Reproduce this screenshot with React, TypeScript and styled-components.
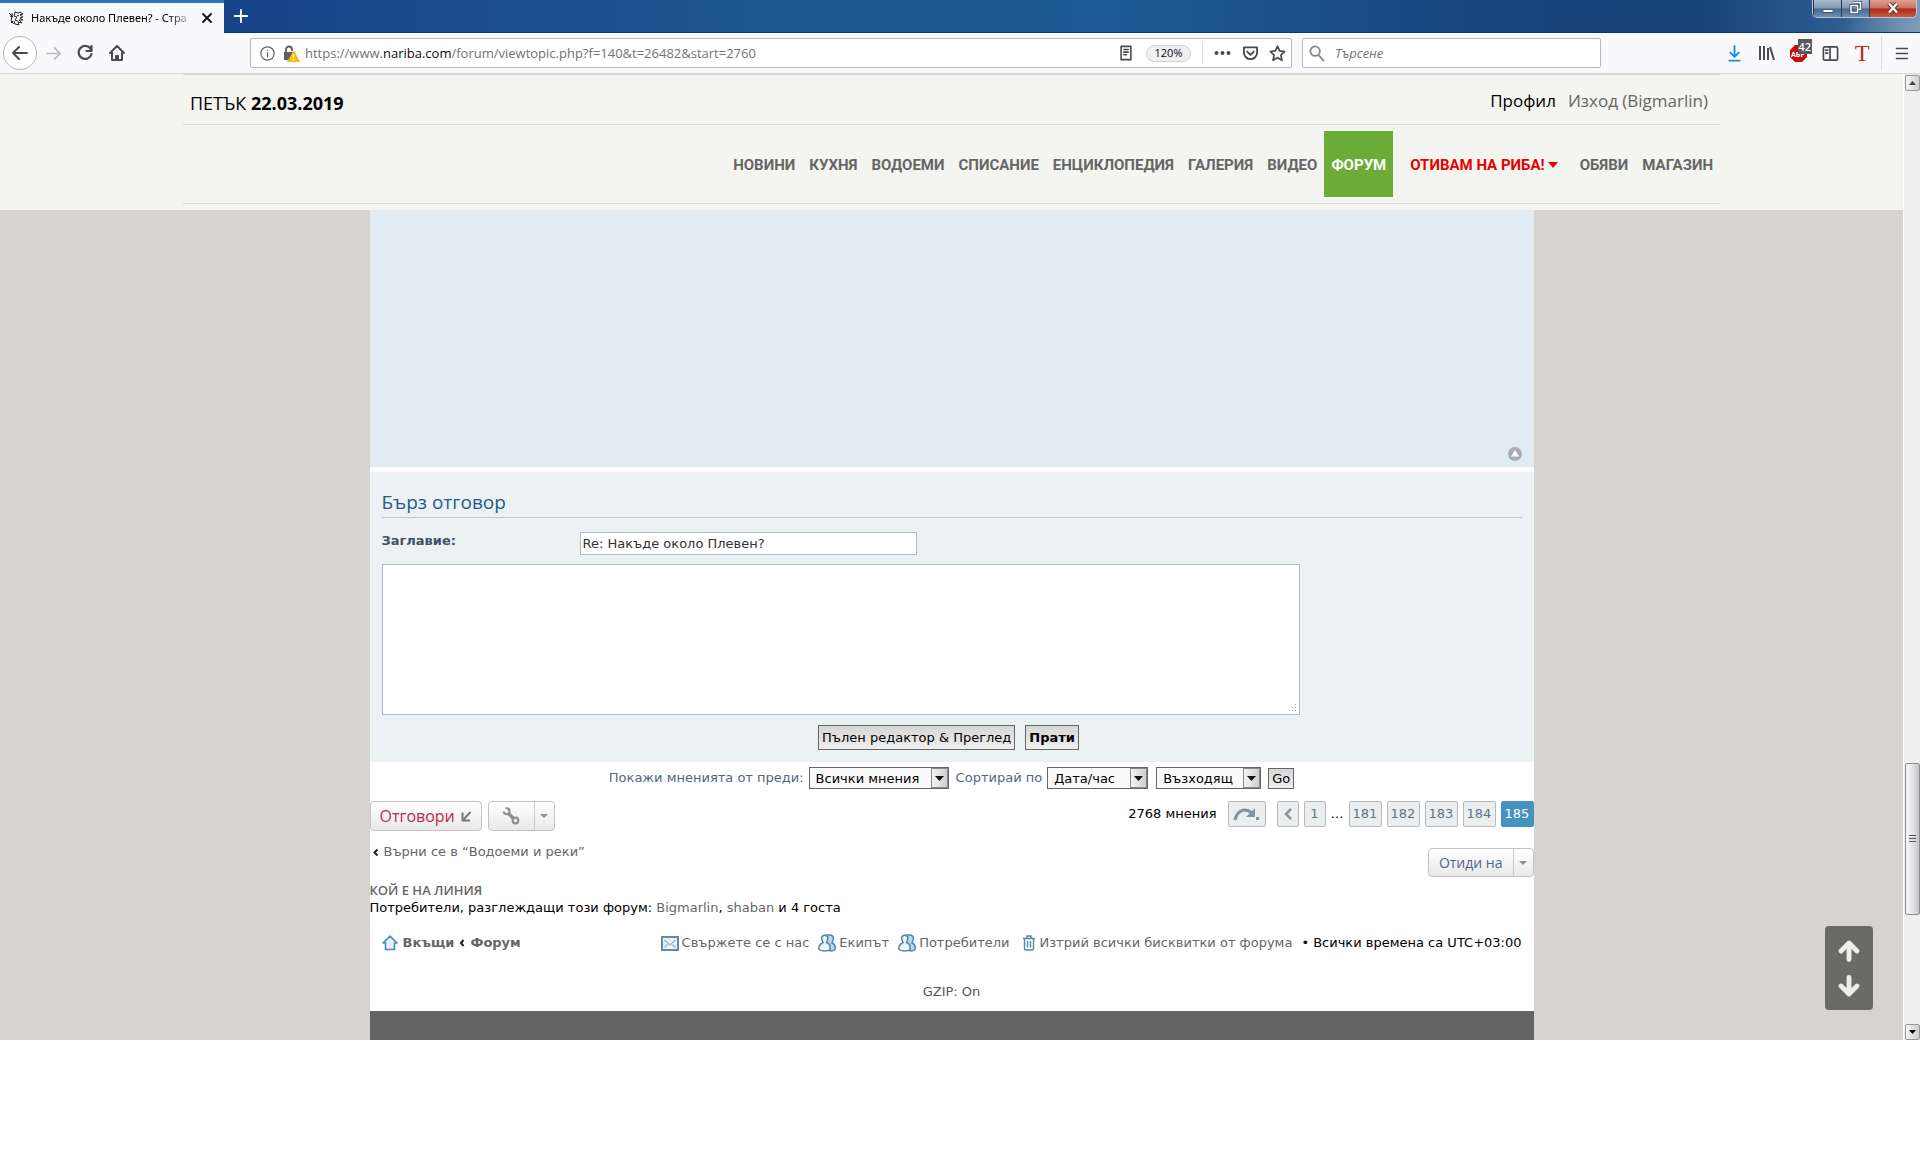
import React from "react";
import styled, { createGlobalStyle, css } from "styled-components";

const GlobalStyle = createGlobalStyle`
  *, *::before, *::after { box-sizing: border-box; }
  body { margin: 0; background: #fff; font-family: "DejaVu Sans", Verdana, sans-serif; font-size: 13px; line-height: 18px; color: #000; }
  a { color: inherit; text-decoration: none; }
  button, input, select, textarea { font-family: inherit; font-size: inherit; margin: 0; }
  svg { display: block; flex: none; }
`;

const ui = `"Open Sans", "Noto Sans", sans-serif`;

/* ---------- browser chrome ---------- */

const TitleBar = styled.div`
  display: flex;
  justify-content: space-between;
  height: 33px;
  background: linear-gradient(100deg, transparent 96%, #8fa9c0 101%),
    linear-gradient(90deg, #17427f 0%, #18458a 14%, #1d5590 38%, #1e5a95 58%, #184883 74%, #174276 88%, #2a5a8e 95%, #47729d 100%);
  border-bottom: 1px solid #1c3358;
`;

const Tab = styled.div`
  display: flex;
  align-items: center;
  width: 224px;
  height: 33px;
  padding: 0 11px 0 8px;
  gap: 6px;
  background: #f9f9fb;
  border-top: 3px solid #2d73c6;
  font: 11px/18px "Noto Sans", sans-serif;
`;

const TabTitle = styled.span`
  flex: 1;
  white-space: nowrap;
  mask-image: linear-gradient(90deg, #000 84%, transparent 100%);
`;

const IconButton = styled.button<{ $w?: number; $c?: string }>`
  display: flex;
  align-items: center;
  justify-content: center;
  flex: none;
  width: ${(p) => p.$w ?? 32}px;
  height: 32px;
  padding: 0;
  border: 0;
  background: none;
  color: ${(p) => p.$c ?? "#4a4a4f"};
`;

const TabClose = styled(IconButton)`
  width: 12px;
  height: 12px;
`;

const TabGroup = styled.div`
  display: flex;
`;

const WindowButtons = styled.div`
  display: flex;
  height: 18px;
  margin-right: 3px;
  border: 1px solid #b8c8da;
  border-top: 0;
  border-radius: 0 0 5px 5px;
  overflow: hidden;
`;

const WindowButton = styled.button<{ $close?: boolean }>`
  display: flex;
  align-items: center;
  justify-content: center;
  width: ${(p) => (p.$close ? 47 : 28)}px;
  padding: 0 0 2px;
  border: 0;
  border-left: 1px solid #27394f;
  background: ${(p) =>
    p.$close
      ? "linear-gradient(#dba092, #c9705f 48%, #ab2a15 52%, #c85b42)"
      : "linear-gradient(#a9bccf, #7f99b5 48%, #48688c 52%, #6f8eb0)"};
`;

const Toolbar = styled.div`
  display: flex;
  align-items: center;
  height: 41px;
  background: #f9f9fb;
  border-bottom: 1px solid #d5d5d7;
`;

const BackButton = styled(IconButton)`
  width: 34px;
  height: 34px;
  margin: 0 0 0 3px;
  border: 1px solid #b5b5b8;
  border-radius: 50%;
  background: #fff;
`;

const NavButtons = styled.div`
  display: flex;
  align-items: center;
  width: 250px;
`;

const Field = styled.label<{ $grow?: boolean }>`
  display: flex;
  align-items: center;
  height: 30px;
  ${(p) => (p.$grow ? "flex: 1; min-width: 0;" : "width: 299px; margin-left: 10px;")}
  border: 1px solid #b9b9bc;
  border-radius: 2px;
  background: #fff;
  font-family: ${ui};
  color: #737373;
`;

const UrlText = styled.span`
  flex: 1;
  padding-left: 5px;
  white-space: nowrap;
  overflow: hidden;
  b { font-weight: 400; color: #0c0c0d; }
`;

const SearchInput = styled.input`
  flex: 1;
  min-width: 0;
  border: 0;
  padding: 0 6px;
  background: none;
  font-size: 13px;
  outline: 0;
  &::placeholder { color: #737373; font-style: italic; opacity: 1; }
`;

const Zoom = styled.button`
  width: 45px;
  height: 17px;
  margin: 0 11px 0 9px;
  padding: 0;
  border: 1px solid #cfcfd2;
  border-radius: 9px;
  background: #f0f0f2;
  font-size: 11px;
  line-height: 14px;
  color: #0c0c0d;
`;

const Rule = styled.span`
  width: 1px;
  height: 22px;
  margin-right: 4px;
  background: #dcdcde;
`;

const TallRule = styled(Rule)`
  height: 34px;
  margin: 0 0 0 3px;
`;

const Extensions = styled.div`
  display: flex;
  align-items: center;
  justify-content: flex-end;
  width: 319px;
`;

const Adblock = styled.span`
  position: relative;
  display: block;
`;

const Badge = styled.span`
  position: absolute;
  left: 8px;
  top: -6px;
  padding: 0 1px;
  background: #5a5a5c;
  color: #fff;
  font: 600 11px/15px ${ui};
`;

const SerifT = styled.span`
  font: 24px/24px "Liberation Serif", serif;
  color: #b3301d;
`;

/* ---------- viewport and scrollbar ---------- */

const Viewport = styled.div`
  position: relative;
  display: flex;
`;

const Page = styled.div`
  flex: 1;
  min-width: 0;
  background: #d5d4cf;
`;

const Scrollbar = styled.div`
  display: flex;
  flex-direction: column;
  width: 17px;
  padding: 1px 0 0 1px;
  border-left: 1px solid #fff;
  background: #efeff0;
`;

const ScrollButton = styled.button`
  display: flex;
  align-items: center;
  justify-content: center;
  width: 15px;
  height: 16px;
  padding: 0;
  border: 1px solid #999;
  border-radius: 2px;
  background: linear-gradient(90deg, #f4f4f4, #cfcfd2);
`;

const Track = styled.div<{ $part: number }>`
  flex: ${(p) => p.$part} 1 0;
`;

const Thumb = styled.div`
  display: flex;
  align-items: center;
  justify-content: center;
  width: 15px;
  height: 152px;
  border: 1px solid #8f8f92;
  border-radius: 2px;
  background: linear-gradient(90deg, #f6f6f6, #e4e4e7 50%, #c3c3c9);
`;

/* ---------- site header ---------- */

const Header = styled.header`
  padding: 0 20px 6px;
  background: #f4f4f1;
  font-family: ${ui};
`;

const HeaderInner = styled.div`
  max-width: 1537px;
  margin: 0 auto;
  border-top: 1px solid #dadad8;
`;

const TopLine = styled.div`
  display: flex;
  justify-content: space-between;
  height: 50px;
  padding: 15px 12px 0 7px;
  border-bottom: 1px solid #dadad8;
  font-size: 17px;
  line-height: 26px;
`;

const Today = styled.span`
  font-size: 18px;
`;

const UserLinks = styled.div`
  display: flex;
  gap: 12px;
  line-height: 22px;
`;

const GreyLink = styled.a`
  color: #666;
`;

const MainNav = styled.nav`
  display: flex;
  justify-content: flex-end;
  padding: 6px 0;
  border-bottom: 1px solid #dadad8;
  font: bold 15px/64px Roboto, sans-serif;
  color: #666;
`;

const NavLink = styled.a<{ $kind?: "active" | "hot" }>`
  display: flex;
  align-items: center;
  gap: 3px;
  padding: 2px 7px 0;
  white-space: nowrap;
  ${(p) => p.$kind === "active" && css`background: #6bac39; color: #fff;`}
  ${(p) => p.$kind === "hot" && css`margin: 0 8px 0 10px; color: #e60000;`}
`;

/* ---------- forum body ---------- */

const Content = styled.main`
  max-width: 1164px;
  margin: 0 auto;
  background: #fff;
`;

const Post = styled.section`
  display: flex;
  align-items: flex-end;
  justify-content: flex-end;
  height: 257px;
  padding: 6px 12px;
  margin-bottom: 5px;
  background: #e1ebf2;
`;

const QuickReply = styled.form`
  padding: 17px 12px 12px;
  background: #ecf1f3;
`;

const ReplyTitle = styled.h2`
  margin: 0 0 14px;
  padding-bottom: 2px;
  border-bottom: 1px solid #c0c5ca;
  font: 19px/26px ${ui};
  color: #28568f;
`;

const SubjectRow = styled.div`
  display: flex;
  margin-bottom: 9px;
`;

const SubjectLabel = styled.label`
  width: 198px;
  line-height: 17px;
  font-weight: bold;
  color: #425067;
`;

const SubjectInput = styled.input`
  width: 337px;
  height: 23px;
  padding: 0 2px;
  border: 1px solid #b4bac0;
  border-radius: 0;
  background: #fff;
  color: #333;
`;

const MessageWrap = styled.div`
  position: relative;
  width: 918px;
  max-width: 100%;
`;

const Message = styled.textarea`
  display: block;
  width: 100%;
  height: 151px;
  border: 1px solid #b4bac0;
  background: #fff;
  resize: none;
`;

const Grip = styled.svg`
  position: absolute;
  right: 3px;
  bottom: 3px;
`;

const Buttons = styled.div`
  display: flex;
  justify-content: center;
  gap: 10px;
  padding-top: 10px;
  padding-right: 6px;
`;

const FormButton = styled.button<{ $bold?: boolean; $small?: boolean }>`
  height: ${(p) => (p.$small ? 21 : 25)}px;
  padding: 0 3px;
  border: 1px solid #666;
  border-radius: 0;
  background: linear-gradient(#d6d6d6, #efefef);
  font-weight: ${(p) => (p.$bold ? "bold" : "normal")};
  color: #000;
`;

const SortBar = styled.form`
  display: flex;
  align-items: center;
  justify-content: center;
  padding: 5px 0;
  color: #536482;
`;

const SortLabel = styled.label`
  margin-right: 5px;
`;

const SelectBox = styled.span<{ $w: number; $gap: number }>`
  position: relative;
  width: ${(p) => p.$w}px;
  margin-right: ${(p) => p.$gap}px;
`;

const Select = styled.select`
  display: block;
  appearance: none;
  width: 100%;
  height: 22px;
  padding: 0 20px 0 6px;
  border: 1px solid #666;
  border-radius: 0;
  background: #fafafa;
  color: #000;
`;

const SelectArrow = styled.span`
  position: absolute;
  right: 1px;
  top: 1px;
  display: flex;
  align-items: center;
  justify-content: center;
  width: 17px;
  height: 20px;
  border: 1px solid #888;
  background: linear-gradient(90deg, #f4f4f4, #cfcfd2);
  color: #111;
  pointer-events: none;
`;

const ActionBar = styled.div`
  display: flex;
  align-items: flex-start;
  padding-top: 7px;
`;

const PillButton = styled.button<{ $split?: boolean; $tone?: string; $size?: number }>`
  display: flex;
  align-items: center;
  height: 30px;
  margin-right: 6px;
  padding: ${(p) => (p.$split ? "0" : "0 10px 0 9px")};
  gap: ${(p) => (p.$split ? 0 : 6)}px;
  border: 1px solid #c0c2c4;
  border-radius: 4px;
  background: linear-gradient(#fff, #e9e9e9);
  font: ${(p) => p.$size ?? 16}px/28px ${ui};
  color: ${(p) => p.$tone ?? "#8f8f8f"};
`;

const SplitMain = styled.span`
  display: flex;
  align-items: center;
  justify-content: center;
  height: 28px;
  min-width: 45px;
  padding: 0 10px;
`;

const SplitCaret = styled.span`
  display: flex;
  align-items: center;
  justify-content: center;
  width: 20px;
  height: 28px;
  border-left: 1px solid #c8cacc;
  color: #8f8f8f;
`;

const Pagination = styled.nav`
  display: flex;
  align-items: center;
  gap: 5px;
  margin-left: auto;
`;

const PostCount = styled.span`
  margin-right: 6px;
`;

const PageLink = styled.a<{ $current?: boolean; $w?: number; $gap?: number }>`
  display: flex;
  align-items: center;
  justify-content: center;
  width: ${(p) => p.$w ?? 33}px;
  height: 26px;
  margin-right: ${(p) => p.$gap ?? 0}px;
  border: 1px solid ${(p) => (p.$current ? "#4692bf" : "#b4bac0")};
  border-radius: 2px;
  background: ${(p) => (p.$current ? "#4692bf" : "#eceded")};
  color: ${(p) => (p.$current ? "#fff" : "#5c758c")};
`;

const JumpRow = styled.div`
  display: flex;
  justify-content: space-between;
  padding-top: 12px;
  height: 50px;
`;

const BackLink = styled.a`
  display: flex;
  align-items: center;
  gap: 5px;
  height: 18px;
  padding-left: 2px;
  color: #666;
`;

const JumpButton = styled(PillButton)`
  margin: 5px 0 0;
  height: 29px;
`;

const OnlineTitle = styled.h3`
  margin: 0;
  font: 600 13px/18px ${ui};
  color: #666;
`;

const OnlineText = styled.p`
  margin: 0;
`;

const FootNav = styled.nav`
  display: flex;
  align-items: center;
  height: 24px;
  margin: 14px 12px 28px;
`;

const Crumbs = styled.div`
  display: flex;
  align-items: center;
  gap: 5px;
  margin-right: auto;
  font-weight: bold;
  color: #666;
`;

const FootLink = styled.a<{ $gap?: number }>`
  display: flex;
  align-items: center;
  gap: 3px;
  margin-right: ${(p) => p.$gap ?? 9}px;
  color: #666;
`;

const Gzip = styled.p`
  margin: 0;
  padding-bottom: 10px;
  text-align: center;
  color: #555;
`;

const DarkFooter = styled.footer`
  height: 29px;
  background: #646464;
`;

const JumpArrows = styled.div`
  position: absolute;
  right: 47px;
  bottom: 30px;
  display: flex;
  flex-direction: column;
  align-items: center;
  width: 48px;
  height: 84px;
  padding: 7px 0;
  border-radius: 4px;
  background: #6a6a67;
`;

const ArrowButton = styled.button`
  display: flex;
  align-items: center;
  justify-content: center;
  width: 100%;
  height: 35px;
  padding: 0;
  border: 0;
  background: none;
  color: #ededeb;
`;

/* ---------- drawings ---------- */

const Caret = ({ w = 9, h = 5 }: { w?: number; h?: number }) => (
  <svg width={w} height={h} viewBox="0 0 10 6" preserveAspectRatio="none"><path d="M0 0h10L5 6z" fill="currentColor" /></svg>
);

const Stroke = ({ d, size = 18, sw = 2 }: { d: string; size?: number; sw?: number }) => (
  <svg width={size} height={size} viewBox="0 0 18 18" fill="none" stroke="currentColor" strokeWidth={sw} strokeLinecap="round" strokeLinejoin="round">
    <path d={d} />
  </svg>
);

const FishIcon = () => (
  <svg width="17" height="17" viewBox="0 0 17 17" fill="none" stroke="#222" strokeWidth="1">
    <path d="M1 3l3 3-1 5 3 3M2 6l3 1M4 3v4M7 2l3 1 2-1 3 2-3 1M12 5l3 2-3 1 3 2-4 0M11 10l3 3-4-1 1 3-4-1-1-3M7 2L6 6l3 1-2 3 3 1M9 5l2 1M5 11l-2 2" />
  </svg>
);

const UsersIcon = () => (
  <svg width="18" height="18" viewBox="0 0 18 18" fill="#eef4f8" stroke="#4e88ad" strokeWidth="1.5">
    <path d="M8 9C6 6 6 1.200 9.500 1H12c4 0 4 5 2 8 3 1 3.500 4 3 6.500-2 2-6 2-8 0z" fill="#bcd6e6" />
    <path d="M5 8.500C3 5 3 1.200 6.800 1.200S10.500 5 8.500 8.500c3.500 1.500 4 4 3.500 7-2.500 2-8 2-11 0-.5-3 1-5.500 4-7z" />
  </svg>
);

const HomeBlue = () => (
  <svg width="16" height="16" viewBox="0 0 16 16" fill="#e9eef2" stroke="#3c8fc4" strokeWidth="1.600" strokeLinejoin="round">
    <path d="M8 1l7 7h-2.500v6.500h-9V8H1z" />
  </svg>
);

const Envelope = () => (
  <svg width="18" height="15" viewBox="0 0 18 15" fill="#edf2f6" stroke="#5a8cab" strokeWidth="2">
    <path d="M1 1h16v13H1z" /><path d="M3.500 4L9 9l5.500-5M3.500 11.500l3-3M14.500 11.500l-3-3" stroke="#9fb4c4" strokeWidth="1.500" fill="none" />
  </svg>
);

const Trash = () => (
  <svg width="14" height="16" viewBox="0 0 14 16" fill="none" stroke="#4e88ad" strokeWidth="1.400">
    <path d="M1 3.500h12M5 3V1h4v2M2.500 4v9.500q0 1.500 1.500 1.500h6q1.500 0 1.500-1.500V4M5.500 6v6.500M8.500 6v6.500" />
  </svg>
);

const pages = ["181", "182", "183", "184"];

const Dropdown = ({ id, value, w, gap }: { id: string; value: string; w: number; gap: number }) => (
  <SelectBox $w={w} $gap={gap}>
    <Select id={id}><option>{value}</option></Select>
    <SelectArrow><Caret /></SelectArrow>
  </SelectBox>
);

export default function App() {
  return (
    <>
      <GlobalStyle />
      <TitleBar>
        <TabGroup>
          <Tab>
            <FishIcon />
            <TabTitle>Накъде около Плевен? - Стра</TabTitle>
            <TabClose $c="#111" aria-label="Затвори"><Stroke size={12} sw={2.800} d="M3 3l12 12M15 3L3 15" /></TabClose>
          </Tab>
          <IconButton $c="#fff" $w={34} aria-label="Нов раздел"><Stroke size={16} d="M9 2v14M2 9h14" /></IconButton>
        </TabGroup>
        <WindowButtons>
          <WindowButton aria-label="Минимизирай"><svg width="12" height="12" viewBox="0 0 12 12"><path d="M1 7.500h10v3H1z" fill="#fff" stroke="#45566b" /></svg></WindowButton>
          <WindowButton aria-label="Възстанови"><svg width="13" height="13" viewBox="0 0 13 13" fill="none"><path d="M4.500 1.500h7v7h-2M2 4.500h6.500v7H2z" stroke="#35465b" strokeWidth="3" /><path d="M4.500 1.500h7v7h-2M2 4.500h6.500v7H2z" stroke="#fff" strokeWidth="1.500" /></svg></WindowButton>
          <WindowButton $close aria-label="Затвори прозореца"><svg width="14" height="12" viewBox="0 0 14 12"><path d="M3 1.500l8 9M11 1.500l-8 9" stroke="#6d2a20" strokeWidth="4.500" /><path d="M3 1.500l8 9M11 1.500l-8 9" stroke="#fff" strokeWidth="2.500" /></svg></WindowButton>
        </WindowButtons>
      </TitleBar>

      <Toolbar>
        <NavButtons>
          <BackButton aria-label="Назад"><Stroke d="M16 9H2M8 3L2 9l6 6" /></BackButton>
          <IconButton $c="#b9b9bb" aria-label="Напред"><Stroke size={17} sw={1.800} d="M2 9h14M10 3l6 6-6 6" /></IconButton>
          <IconButton aria-label="Презареди"><Stroke d="M15 5.500A6.500 6.500 0 1 0 15.500 10M15.500 2v5h-5" sw={2.200} /></IconButton>
          <IconButton aria-label="Начало"><Stroke d="M2 9l7-7 7 7M4 8.500V16h10V8.500M8 16v-4h2v4" /></IconButton>
        </NavButtons>
        <Field as="div" $grow>
          <IconButton $c="#6a6a6d" aria-label="Информация"><Stroke size={15} sw={1.500} d="M9 1a8 8 0 1 0 0 16A8 8 0 1 0 9 1M9 8v5M9 5v.3" /></IconButton>
          <svg width="17" height="17" viewBox="0 0 17 17">
            <path d="M3 7V4.500a3 3 0 0 1 6 0V6" fill="none" stroke="#5f5f62" strokeWidth="1.900" />
            <path d="M1 7h9l-3 8H1z" fill="#5f5f62" />
            <path d="M10.500 6l6 10.500h-12z" fill="#ffbf00" stroke="#e89d00" strokeWidth=".6" />
            <path d="M10.500 9.500v3.500M10.500 14v1.300" stroke="#fff" strokeWidth="1.400" />
          </svg>
          <UrlText>https://www.<b>nariba.com</b>/forum/viewtopic.php?f=140&amp;t=26482&amp;start=2760</UrlText>
          <IconButton $w={22} aria-label="Режим за четене"><Stroke size={16} sw={1.800} d="M3.500 1.500h11v15h-11zM6.500 5h5M6.500 8h5M6.500 11h3" /></IconButton>
          <Zoom>120%</Zoom>
          <Rule />
          <IconButton $w={30} aria-label="Действия"><svg width="17" height="4" viewBox="0 0 17 4" fill="currentColor"><circle cx="2.500" cy="2" r="2" /><circle cx="8.500" cy="2" r="2" /><circle cx="14.500" cy="2" r="2" /></svg></IconButton>
          <IconButton $w={26} aria-label="Pocket"><Stroke size={17} d="M2 2.500h14v5.500a7 7 0 0 1-14 0zM5.500 7L9 10.500 12.500 7" /></IconButton>
          <IconButton $w={28} aria-label="Отметка"><Stroke size={17} sw={1.800} d="M9 1.300l2.300 5 5.200.6-3.900 3.700 1.100 5.600L9 13.400l-4.700 2.800 1.100-5.600L1.500 6.900l5.200-.6z" /></IconButton>
        </Field>
        <Field htmlFor="web-search">
          <IconButton $w={26} $c="#8a8a8d" as="span"><Stroke size={17} d="M7.500 1.500a5 5 0 1 0 0 10a5 5 0 1 0 0-10M11 10.500l5.500 6" /></IconButton>
          <SearchInput id="web-search" placeholder="Търсене" />
        </Field>
        <Extensions>
          <IconButton $c="#1e88e5" aria-label="Изтегляния"><Stroke size={17} d="M9 1v11M4.500 8L9 12.500 13.500 8M3.500 16.500h11" /></IconButton>
          <IconButton aria-label="Библиотека"><svg width="17" height="16" viewBox="0 0 17 16" stroke="currentColor" strokeWidth="2" fill="none"><path d="M2 1v14M6 1v14M10 3v12M12 2l4 13" /></svg></IconButton>
          <IconButton aria-label="Adblock">
            <Adblock>
              <svg width="17" height="17" viewBox="0 0 17 17"><path d="M5 0h7l5 5v7l-5 5H5l-5-5V5z" fill="#c70d0d" /><text x="1" y="11.500" fontSize="7" fontWeight="bold" fill="#fff" fontFamily="Open Sans, sans-serif">ABP</text></svg>
              <Badge>42</Badge>
            </Adblock>
          </IconButton>
          <IconButton aria-label="Странична лента"><Stroke size={17} sw={1.800} d="M3 2h12q1.500 0 1.500 1.500v11Q16.500 16 15 16H3q-1.500 0-1.500-1.500v-11Q1.500 2 3 2zM8.500 2v14M4 5.500h2M4 8.500h2" /></IconButton>
          <IconButton aria-label="T"><SerifT>T</SerifT></IconButton>
          <TallRule />
          <IconButton $w={38} aria-label="Меню"><Stroke size={15} d="M3 3h13M3 9h13M3 15h13" /></IconButton>
        </Extensions>
      </Toolbar>

      <Viewport>
        <Page>
          <Header>
            <HeaderInner>
              <TopLine>
                <Today>ПЕТЪК <b>22.03.2019</b></Today>
                <UserLinks><a href="#profile">Профил</a><GreyLink href="#logout">Изход (Bigmarlin)</GreyLink></UserLinks>
              </TopLine>
              <MainNav>
                {["НОВИНИ", "КУХНЯ", "ВОДОЕМИ", "СПИСАНИЕ", "ЕНЦИКЛОПЕДИЯ", "ГАЛЕРИЯ", "ВИДЕО"].map((t) => <NavLink key={t} href="#nav">{t}</NavLink>)}
                <NavLink href="#forum" $kind="active">ФОРУМ</NavLink>
                <NavLink href="#fishing" $kind="hot">ОТИВАМ НА РИБА!<Caret w={10} h={6} /></NavLink>
                <NavLink href="#ads">ОБЯВИ</NavLink>
                <NavLink href="#shop">МАГАЗИН</NavLink>
              </MainNav>
            </HeaderInner>
          </Header>

          <Content>
            <Post>
              <a href="#top" aria-label="Горе"><svg width="14" height="14" viewBox="0 0 14 14"><circle cx="7" cy="7" r="7" fill="#a9adb2" /><path d="M7 3l4 6.500H3z" fill="#fff" /></svg></a>
            </Post>

            <QuickReply onSubmit={(e) => e.preventDefault()}>
              <ReplyTitle>Бърз отговор</ReplyTitle>
              <SubjectRow>
                <SubjectLabel htmlFor="subject">Заглавие:</SubjectLabel>
                <SubjectInput id="subject" defaultValue="Re: Накъде около Плевен?" />
              </SubjectRow>
              <MessageWrap>
                <Message aria-label="Съобщение" />
                <Grip width="9" height="9" viewBox="0 0 9 9" fill="#a0a0a0"><path d="M7 1h1v1H7zM4 4h1v1H4zM7 4h1v1H7zM1 7h1v1H1zM4 7h1v1H4zM7 7h1v1H7z" /></Grip>
              </MessageWrap>
              <Buttons>
                <FormButton type="button">Пълен редактор &amp; Преглед</FormButton>
                <FormButton $bold>Прати</FormButton>
              </Buttons>
            </QuickReply>

            <SortBar onSubmit={(e) => e.preventDefault()}>
              <SortLabel htmlFor="since">Покажи мненията от преди:</SortLabel>
              <Dropdown id="since" value="Всички мнения" w={140} gap={7} />
              <SortLabel htmlFor="sort">Сортирай по</SortLabel>
              <Dropdown id="sort" value="Дата/час" w={101} gap={8} />
              <Dropdown id="dir" value="Възходящ" w={105} gap={7} />
              <FormButton $small>Go</FormButton>
            </SortBar>

            <ActionBar>
              <PillButton $tone="#bc2a4d">Отговори
                <svg width="10" height="11" viewBox="0 0 10 11" fill="none" stroke="#777" strokeWidth="2"><path d="M9.500 1L3 8M1.500 1.500v8H9" /></svg>
              </PillButton>
              <PillButton $split aria-label="Инструменти">
                <SplitMain><svg width="18" height="18" viewBox="0 0 18 18" fill="none" stroke="#8f8f8f"><path d="M6.500 6.500l5 5" strokeWidth="3.500" /><path d="M3.500 1.500c3-1 5 1.500 3.500 4.500-2 2-5 1-5.500-1.500" strokeWidth="2.200" /><circle cx="13.500" cy="13.500" r="2.800" strokeWidth="2.200" /></svg></SplitMain>
                <SplitCaret><Caret w={8} h={4} /></SplitCaret>
              </PillButton>
              <Pagination>
                <PostCount>2768 мнения</PostCount>
                <PageLink href="#jump" $w={38} $gap={6} aria-label="Отиди на страница">
                  <svg width="28" height="16" viewBox="0 0 28 16" fill="none"><path d="M2 14C4 5 11 1 19 7" stroke="#7f93a3" strokeWidth="3" /><path d="M22 2v9h-9z" fill="#7f93a3" /><path d="M23 11h3v3h-3z" fill="#7f93a3" /></svg>
                </PageLink>
                <PageLink href="#prev" $w={22} aria-label="Предишна"><svg width="8" height="12" viewBox="0 0 8 12" fill="none" stroke="#8494a3" strokeWidth="2.500"><path d="M7 1L2 6l5 5" /></svg></PageLink>
                <PageLink href="#1" $w={22}>1</PageLink>
                <span>…</span>
                {pages.map((n) => <PageLink key={n} href={`#${n}`}>{n}</PageLink>)}
                <PageLink href="#185" $current>185</PageLink>
              </Pagination>
            </ActionBar>

            <JumpRow>
              <BackLink href="#back"><svg width="7" height="9" viewBox="0 0 7 9" fill="none" stroke="#222" strokeWidth="2"><path d="M5.500 1.500L2.500 4.500l3 3" /></svg>Върни се в “Водоеми и реки”</BackLink>
              <JumpButton $split $tone="#536482" $size={14}><SplitMain>Отиди на</SplitMain><SplitCaret><Caret w={8} h={4} /></SplitCaret></JumpButton>
            </JumpRow>

            <OnlineTitle>КОЙ Е НА ЛИНИЯ</OnlineTitle>
            <OnlineText>Потребители, разглеждащи този форум: <GreyLink href="#u1">Bigmarlin</GreyLink>, <GreyLink href="#u2">shaban</GreyLink> и 4 госта</OnlineText>

            <FootNav>
              <Crumbs>
                <HomeBlue /><a href="#home">Вкъщи</a>
                <svg width="6" height="8" viewBox="0 0 6 8" fill="none" stroke="#222" strokeWidth="2"><path d="M4.500 1L2 4l2.500 3" /></svg>
                <a href="#forum">Форум</a>
              </Crumbs>
              <FootLink href="#contact"><Envelope />Свържете се с нас</FootLink>
              <FootLink href="#team"><UsersIcon />Екипът</FootLink>
              <FootLink href="#members" $gap={13}><UsersIcon />Потребители</FootLink>
              <FootLink href="#cookies"><Trash />Изтрий всички бисквитки от форума</FootLink>
              <span>• Всички времена са UTC+03:00</span>
            </FootNav>
            <Gzip>GZIP: On</Gzip>
            <DarkFooter />
          </Content>
        </Page>
        <Scrollbar>
          <ScrollButton aria-label="Нагоре"><svg width="7" height="4" viewBox="0 0 7 4"><path d="M0 4h7L3.500 0z" fill="#444" /></svg></ScrollButton>
          <Track $part={86} />
          <Thumb><svg width="7" height="8" viewBox="0 0 7 8" stroke="#555"><path d="M0 .5h7M0 3.500h7M0 6.500h7" /></svg></Thumb>
          <Track $part={14} />
          <ScrollButton aria-label="Надолу"><Caret w={7} h={4} /></ScrollButton>
        </Scrollbar>
        <JumpArrows>
          <ArrowButton aria-label="Към началото"><Stroke size={22} sw={4} d="M9 16V3M2.500 9L9 2.500 15.500 9" /></ArrowButton>
          <ArrowButton aria-label="Към края"><Stroke size={22} sw={4} d="M9 2v13M2.500 9L9 15.500 15.500 9" /></ArrowButton>
        </JumpArrows>
      </Viewport>
    </>
  );
}
